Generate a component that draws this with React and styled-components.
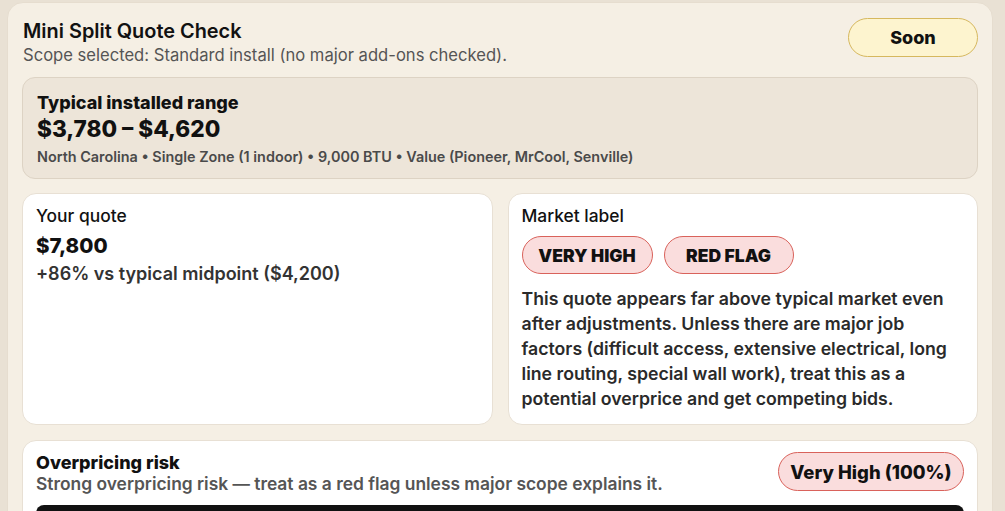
import React from 'react';
import styled, { createGlobalStyle } from 'styled-components';

const Global = createGlobalStyle`
  html, body {
    margin: 0;
    background: #e9e1d4;
    font-family: Inter, "Liberation Sans", sans-serif;
    color: #111;
  }
  * { box-sizing: border-box; }
`

const Page = styled.div`
  padding: 2px 12px 0 7px;
`

const Card = styled.div`
  background: #f5efe4;
  border: 1px solid #e6ddcf;
  border-radius: 16px;
  padding: 15px 14px 30px 14px;
  display: flex;
  flex-direction: column;
`

const Header = styled.div`
  display: flex;
  justify-content: space-between;
  align-items: flex-start;
  padding-left: 1px;
`

const Title = styled.h1`
  margin: 0;
  font-size: 19.9px;
  font-weight: 600;
  line-height: 26px;
`

const Sub = styled.p`
  margin: 0;
  font-size: 16.6px;
  line-height: 22px;
  color: #555;
  font-weight: 400;
`

const Pill = styled.span`
  display: inline-flex;
  align-items: center;
  justify-content: center;
  flex-shrink: 0;
  height: ${p => p.h || 38}px;
  width: ${p => p.w}px;
  border-radius: 999px;
  font-size: ${p => p.fs || 17.5}px;
  font-weight: ${p => p.fw || 800};
  color: #111;
  background: ${p => p.tone === 'warn' ? '#fdf4cf' : '#fadddd'};
  border: 1px solid ${p => p.tone === 'warn' ? '#d6b85e' : '#d9625b'};
  text-transform: ${p => p.upper ? 'uppercase' : 'none'};
`

const Range = styled.div`
  margin-top: 11px;
  background: #ede5d9;
  border: 1px solid #ddd3c4;
  border-radius: 13px;
  padding: 14px 14px 11px;
  display: flex;
  flex-direction: column;
`

const Label = styled.div`
  font-size: ${p => p.heavy ? 18 : 17.4}px;
  font-weight: ${p => p.heavy ? 800 : 500};
  line-height: ${p => p.heavy ? 22 : 24}px;
  color: #111;
`

const Big = styled.div`
  font-size: ${p => p.size || 22.6}px;
  font-weight: 800;
  line-height: 30px;
  margin-top: ${p => p.mt || 0}px;
`

const Meta = styled.div`
  font-size: 14.4px;
  font-weight: 600;
  color: #4a4a4a;
  margin-top: 3px;
  line-height: 20px;
`

const Grid = styled.div`
  margin-top: 14px;
  display: grid;
  grid-template-columns: 1fr 1fr;
  gap: 15px;
`

const Panel = styled.div`
  background: #fff;
  border: 1px solid #e8e0d4;
  border-radius: 14px;
  padding: 10px 13px 13px 13px;
  display: flex;
  flex-direction: column;
`

const RiskPanel = styled(Panel)`
  margin-top: 15px;
  padding: 11px 13px 13px 13px;
`

const Delta = styled.div`
  font-size: 18px;
  font-weight: 600;
  color: #333;
  line-height: 24px;
  margin-top: 1px;
`

const Pills = styled.div`
  display: flex;
  gap: 11px;
  margin-top: 8px;
`

const Body = styled.p`
  margin: 12px 0 0;
  font-size: 17.7px;
  font-weight: 600;
  line-height: 25px;
  color: #2a2a2a;
`

const RiskHead = styled.div`
  display: flex;
  justify-content: space-between;
  align-items: flex-start;
`

const RiskSub = styled.div`
  font-size: 17.4px;
  font-weight: 600;
  color: #555;
  line-height: 20px;
`

const Bar = styled.div`
  height: 20px;
  background: #111;
  border-radius: 8px;
  margin-top: 11px;
`

export default function App() {
  return <Page>
    <Global />
    <Card>
      <Header>
        <div>
          <Title>Mini Split Quote Check</Title>
          <Sub>Scope selected: Standard install (no major add-ons checked).</Sub>
        </div>
        <Pill tone="warn" w={130} h={39} fs={18}>Soon</Pill>
      </Header>

      <Range>
        <Label heavy>Typical installed range</Label>
        <Big>$3,780 – $4,620</Big>
        <Meta>North Carolina • Single Zone (1 indoor) • 9,000 BTU • Value (Pioneer, MrCool, Senville)</Meta>
      </Range>

      <Grid>
        <Panel>
          <Label>Your quote</Label>
          <Big size={20.5} mt={3}>$7,800</Big>
          <Delta>+86% vs typical midpoint ($4,200)</Delta>
        </Panel>
        <Panel>
          <Label>Market label</Label>
          <Pills>
            <Pill upper w={131} fw={900}>Very High</Pill>
            <Pill upper w={130} fw={900}>Red Flag</Pill>
          </Pills>
          <Body>
            This quote appears far above typical market even after adjustments. Unless there are major job factors (difficult access, extensive electrical, long line routing, special wall work), treat this as a potential overprice and get competing bids.
          </Body>
        </Panel>
      </Grid>

      <RiskPanel>
        <RiskHead>
          <div>
            <Label heavy>Overpricing risk</Label>
            <RiskSub>Strong overpricing risk — treat as a red flag unless major scope explains it.</RiskSub>
          </div>
          <Pill w={186} h={39} fs={18.5}>Very High (100%)</Pill>
        </RiskHead>
        <Bar />
      </RiskPanel>
    </Card>
  </Page>
}
